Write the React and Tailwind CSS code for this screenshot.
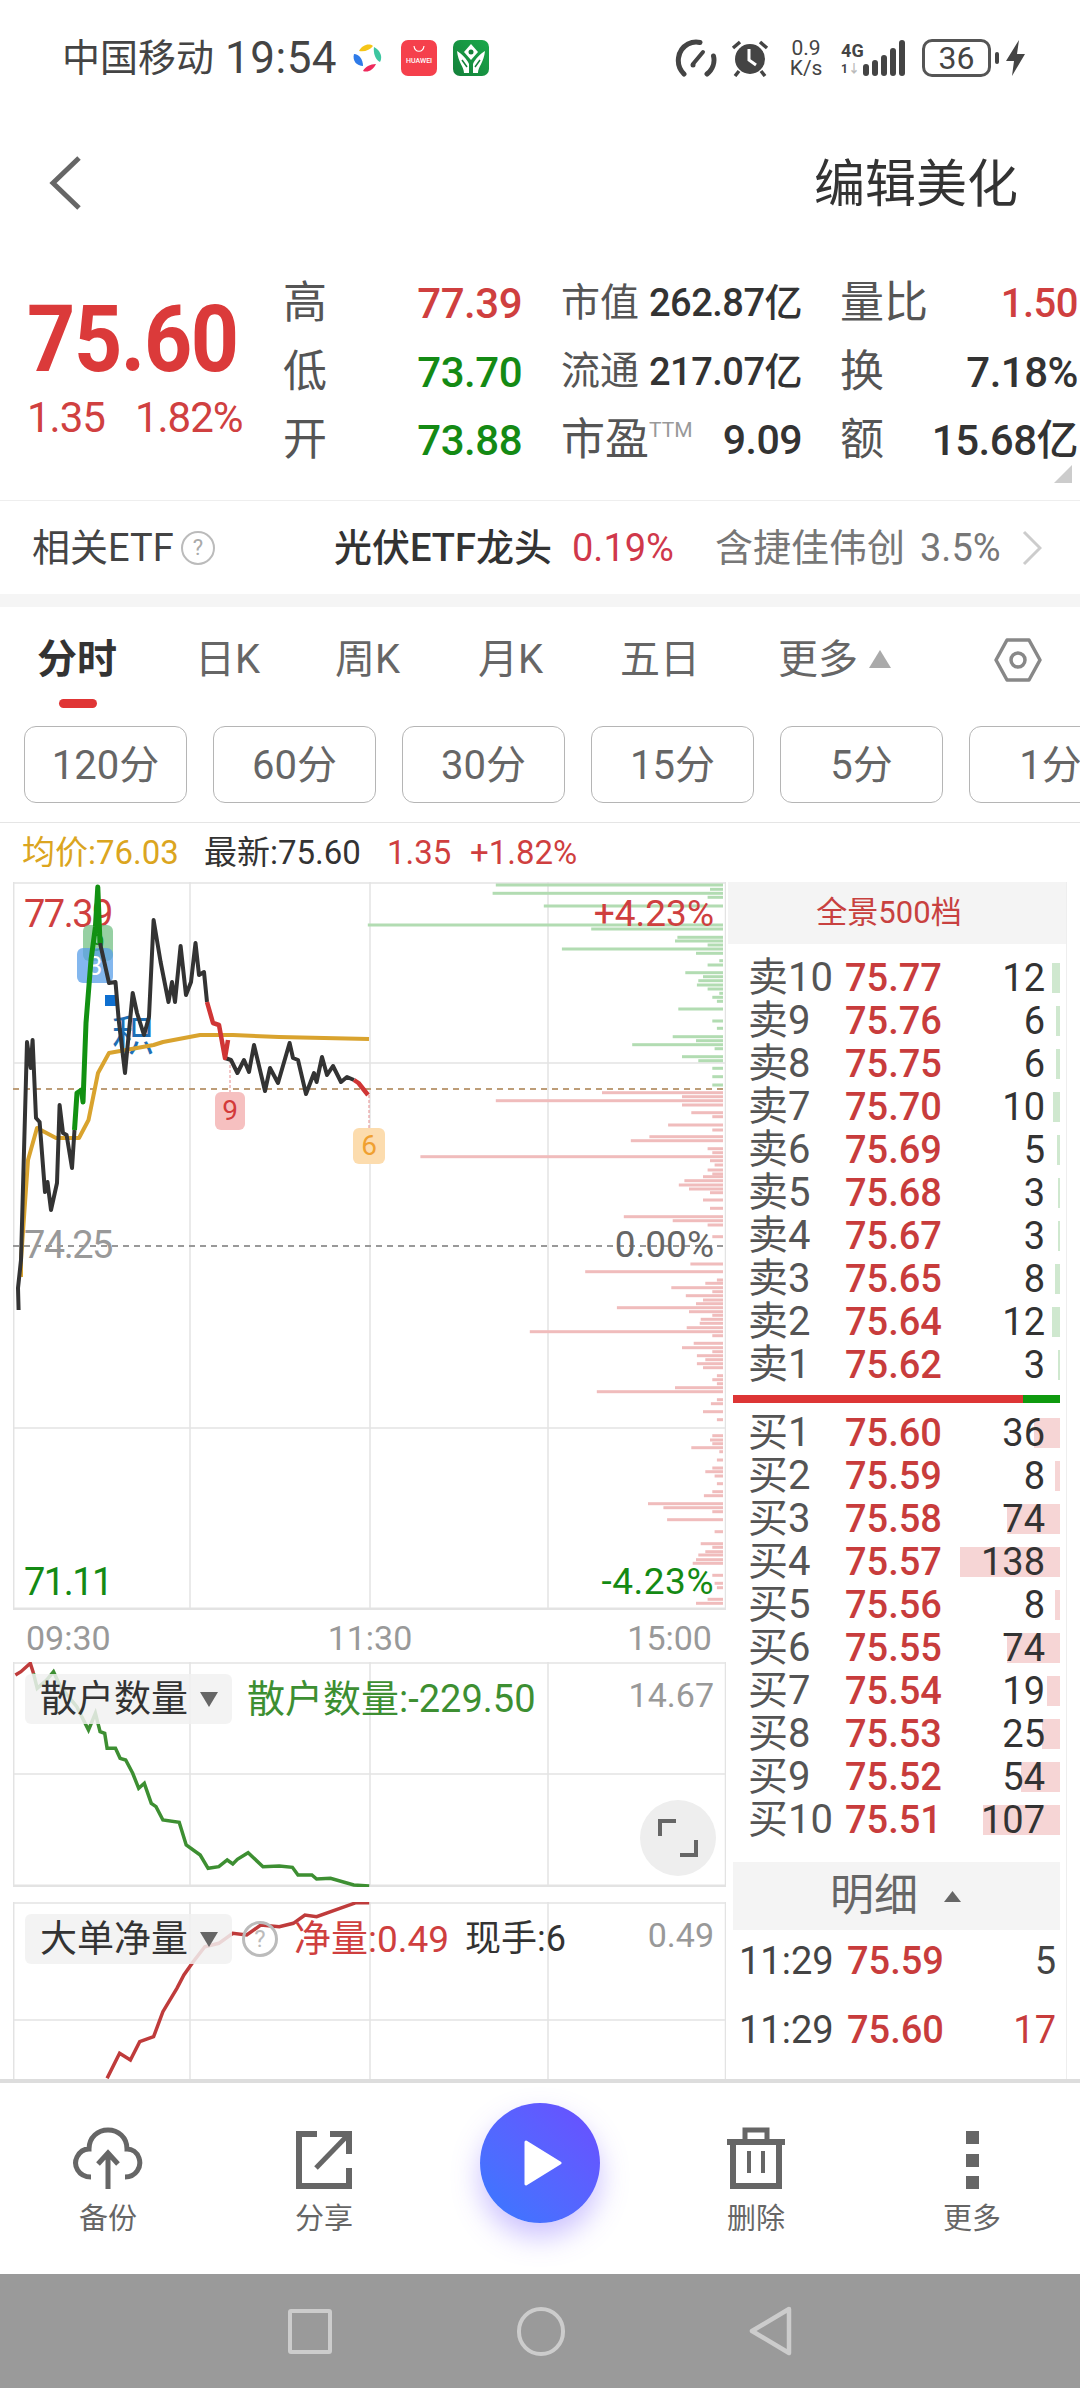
import React from 'react'

const toPts = (list) => list.map(p => p.join(',')).join(' ')
// readings off the chart: x is scaled, y is offset from the panel top
const fromZoom = (list, top) => list.map(([x, y]) => [+(x / 2.148).toFixed(1), +(top + y / 3).toFixed(1)])

const blackA = [[18.6,1310],[18,1288],[21,1260],[27,1042],[30.7,1068],[32.6,1040],[36,1118],[39.6,1122],[45,1192],[47.5,1182],[51,1210],[57,1183],[59.6,1105],[63,1133],[66.6,1135],[72,1168],[74.5,1130]]
const greenLine = [[74.5,1130],[77,1093],[81.5,1090],[83,1102],[86,1023],[91,960],[95.4,927],[97.8,887],[100,943]]
const blackB = [[100,943],[109,983],[115.5,982],[118.7,1020],[125,1073],[132.7,993],[137,1013],[144,1035],[149,1017],[153.6,920],[160.6,962],[168.5,1002],[172,982],[175,1002],[180.6,946],[186,995],[191,982],[195.5,943],[199,975],[204,972],[207,1002]]
const redA = [[207,1002],[213,1023],[219,1025],[225,1058],[228,1040]]
const blackC = [[225,1058],[231,1060],[237.4,1073],[244,1060],[249,1072],[254,1045],[265,1091],[270,1068],[278,1083],[289.6,1043],[293,1058],[298,1060],[306,1094],[314,1073],[316.6,1082],[322,1057],[327,1075],[333,1066],[341,1082],[347,1077],[354,1080]]
const redB = [[354,1080],[358.5,1083],[368,1095]]
const avgLine = [[21,1277],[21,1260],[28,1160],[37,1128],[56,1138],[79,1138],[88.5,1120],[98,1073],[109,1053],[153.6,1045],[163,1042],[200,1035],[233,1035],[279,1037],[369,1039]]

const greenBars = [[1065,75],[1058,100],[1525,88],[1520,112],[1168,138],[790,195],[1270,207],[1455,232],[1450,243],[1520,255],[1207,267],[1495,280],[1545,302],[1520,315],[1472,338],[1510,350],[1500,362],[1497,375],[1520,387],[1545,400],[1530,412],[1540,424],[1457,447],[1530,483],[1540,505],[1445,530],[1495,542],[1358,554],[1535,566],[1465,590],[1500,602],[1530,625],[1530,650],[1530,675]]
const redBarsA = [[1293,698],[1465,710],[1065,722],[1465,735],[1485,758],[1530,770],[1435,795],[1530,810],[1395,830],[1355,842],[1520,866],[1530,878],[903,890],[1525,902],[1535,915],[1520,930],[1530,942],[1510,950],[1470,962],[1458,975],[1480,987],[1525,998],[1510,1020],[1525,1045],[1340,1070],[1445,1082],[1520,1095],[1530,1130]]
const redBarsB = [[1483,12],[1257,35],[1540,60],[1515,70],[1442,83],[1530,95],[1473,107],[1510,120],[1495,131],[1325,143],[1480,155],[1530,166],[1505,178],[1503,190],[1475,203],[1138,215],[1530,227],[1490,250],[1465,263],[1530,275],[1497,287],[1515,299],[1497,311],[1510,323],[1540,347],[1530,359],[1540,371],[1450,383],[1282,395],[1540,419],[1527,431],[1510,455],[1540,479],[1530,527],[1525,540],[1530,551],[1485,563],[1545,575],[1540,600],[1530,624],[1515,635],[1535,648],[1540,671],[1530,695],[1512,707],[1392,731],[1425,743],[1530,755],[1433,779],[1535,815],[1505,851],[1530,862],[1515,875],[1500,885],[1495,899],[1488,910],[1530,946],[1535,970],[1540,983],[1520,1018],[1495,1030]]

const retailRed = [[72,40],[65,10],[45,35],[33,45]]
const retailGreen = [[72,40],[80,85],[100,60],[115,35],[130,80],[165,140],[190,210],[205,160],[215,215],[225,220],[230,265],[248,265],[258,295],[270,300],[285,340],[298,385],[310,370],[325,430],[335,440],[350,480],[385,487],[400,555],[430,585],[447,625],[470,620],[488,600],[500,612],[510,598],[533,578],[565,620],[600,618],[628,622],[640,645],[670,645],[680,657],[710,655],[760,675],[793,678]]
const bigOrder = [[230,1255],[257,1180],[280,1200],[300,1145],[330,1130],[350,1055],[380,985],[395,945],[415,905],[440,860],[470,850],[500,820],[530,825],[560,795],[600,800],[630,790],[655,765],[680,770],[730,745],[765,728],[793,728]]

const sells = [
  ['10', '75.77', '12', 8], ['9', '75.76', '6', 4], ['8', '75.75', '6', 4], ['7', '75.70', '10', 7], ['6', '75.69', '5', 3],
  ['5', '75.68', '3', 2], ['4', '75.67', '3', 2], ['3', '75.65', '8', 5], ['2', '75.64', '12', 8], ['1', '75.62', '3', 2],
]
const buys = [
  ['1', '75.60', '36', 26], ['2', '75.59', '8', 5], ['3', '75.58', '74', 53], ['4', '75.57', '138', 100], ['5', '75.56', '8', 5],
  ['6', '75.55', '74', 53], ['7', '75.54', '19', 13], ['8', '75.53', '25', 18], ['9', '75.52', '54', 39], ['10', '75.51', '107', 77],
]
const tabs = [['日K', 'w-[70px] ml-[77px]'], ['周K', 'w-[70px] ml-[70px]'], ['月K', 'w-[69px] ml-[73px]'], ['五日', 'w-[77px] ml-[73px]'], ['更多', 'w-[82px] ml-[81px]']]
const chips = ['120分', '60分', '30分', '15分', '5分', '1分']

function StatusBar() {
  return (
    <div className="h-[116px] flex items-center text-[#444] shrink-0">
      <span className="ml-[62px] text-[38px] leading-none">中国移动</span>
      <span className="ml-[11px] text-[44px] leading-none tracking-[0.5px]">19:54</span>
      <svg className="ml-[15px]" width="30" height="30" viewBox="0 0 30 30">
        <path d="M7 8 C10 2 17 0 21 3 C18 7 13 9 7 8Z" fill="#f5c518" />
        <path d="M22 4 C28 7 31 14 28 19 C24 17 21 11 22 4Z" fill="#3cc6a0" />
        <path d="M2 11 C7 11 11 16 11 23 C5 23 0 18 2 11Z" fill="#2f7be8" />
        <path d="M24 21 C21 27 16 30 11 28 C13 24 18 21 24 21Z" fill="#ee2a5c" />
      </svg>
      <div className="ml-[19px] w-[36px] h-[36px] rounded-[7px] bg-[#f5404c] flex flex-col items-center">
        <svg width="14" height="8" viewBox="0 0 14 8" className="mt-[5px]"><path d="M2 1 C3 8 11 8 12 1" stroke="#fff" strokeWidth="1.2" fill="none" /></svg>
        <span className="text-white text-[7px] leading-[10px] mt-[3px] font-medium">HUAWEI</span>
      </div>
      <svg className="ml-[16px]" width="36" height="36" viewBox="0 0 36 36">
        <defs><linearGradient id="abc" x1="0" y1="1" x2="1" y2="0"><stop offset="0" stopColor="#14803a" /><stop offset="1" stopColor="#1aa84a" /></linearGradient></defs>
        <rect width="36" height="36" rx="7" fill="url(#abc)" />
        <path d="M18 4 L25 12 L18 20 L11 12Z" fill="#fff" />
        <circle cx="18" cy="12" r="2.500" fill="#14803a" />
        <path d="M4 11 C8 13 14 19 16 24 L16 33 L11 33 C11 27 5 22 4 11Z" fill="#fff" />
        <path d="M32 11 C28 13 22 19 20 24 L20 33 L25 33 C25 27 31 22 32 11Z" fill="#fff" />
        <path d="M9 20 L14 27 M27 20 L22 27" stroke="#14803a" strokeWidth="1.500" />
      </svg>

      <svg className="ml-[186px]" width="42" height="38" viewBox="0 0 42 38" fill="none" stroke="#444" strokeWidth="5" strokeLinecap="round">
        <path d="M9 35 C0 26 2 11 13 5 C17 3 21 2.500 25 3.500" />
        <path d="M32 35 C38 30 40 23 38.500 17" />
        <path d="M18 25 L28 13" strokeWidth="4" />
        <circle cx="18" cy="26" r="2.500" fill="#444" stroke="none" />
      </svg>
      <svg className="ml-[14px]" width="38" height="38" viewBox="0 0 38 38">
        <circle cx="19" cy="20" r="15" fill="#444" />
        <path d="M18 10 V21 L25 26" stroke="#fff" strokeWidth="3" fill="none" />
        <path d="M2 9 L9 3 M36 9 L29 3 M8 32 L4 37 M30 32 L34 37" stroke="#444" strokeWidth="3.500" />
      </svg>
      <div className="ml-[18px] w-[38px] flex flex-col items-center text-[#444] text-[21px] leading-[20px] font-normal">
        <span>0.9</span>
        <span>K/s</span>
      </div>
      <div className="ml-[16px] w-[26px] flex flex-col text-[#444] font-bold">
        <span className="text-[18px] leading-[22px]">4G</span>
        <span className="text-[12px] leading-[14px]">1<span className="text-[#bbb]">↓</span></span>
      </div>
      <svg className="-ml-[4px]" width="44" height="36" viewBox="0 0 44 36" fill="#444">
        <rect x="0" y="24" width="6" height="12" rx="3" />
        <rect x="9" y="20" width="6" height="16" rx="3" />
        <rect x="18" y="15" width="6" height="21" rx="3" />
        <rect x="27" y="8" width="6" height="28" rx="3" />
        <rect x="36" y="0" width="6" height="36" rx="3" />
      </svg>
      <div className="ml-[15px] w-[69px] h-[38px] rounded-[10px] border-[3px] border-[#555] flex items-center justify-center text-[32px] leading-none">36</div>
      <div className="ml-[4px] w-[4px] h-[12px] rounded-full bg-[#444]"></div>
      <svg className="ml-[7px]" width="19" height="36" viewBox="0 0 19 36"><path d="M13 0 L0 21 L8 21 L6 36 L19 14 L11 14Z" fill="#444" /></svg>
    </div>
  )
}

function Header() {
  return (
    <div className="h-[134px] flex items-center justify-between shrink-0">
      <svg className="ml-[48px]" width="36" height="56" viewBox="0 0 36 56" fill="none"><path d="M31 3 L5 28 L31 53" stroke="#666" strokeWidth="5" /></svg>
      <span className="mr-[62px] mt-[3px] text-[51px] leading-none text-[#333]">编辑美化</span>
    </div>
  )
}

function StatRow({ a, aVal, aColor, b, bVal, bCls = 'text-[38px] tracking-[-0.5px]', c, cVal, cCls }) {
  return (
    <div className="h-[68.5px] flex items-center">
      <div className="w-[239px] flex items-center justify-between">
        <span className="text-[44px] text-[#555] leading-none">{a}</span>
        <span className={"mt-[2px] text-[42px] font-medium leading-none tracking-[-0.5px] " + aColor}>{aVal}</span>
      </div>
      <div className="ml-[39px] w-[241px] flex items-center justify-between">
        <span className="text-[39px] text-[#555] leading-none flex items-start whitespace-nowrap">{b}</span>
        <span className={"font-medium text-[#333] leading-none " + bCls}>{bVal}</span>
      </div>
      <div className="ml-[38px] w-[238px] flex items-center justify-between">
        <span className="text-[44px] text-[#555] leading-none">{c}</span>
        <span className={"mt-[2px] leading-none tracking-[-0.5px] " + cCls}>{cVal}</span>
      </div>
    </div>
  )
}

function Quote() {
  return (
    <div className="relative h-[251px] pt-[19px] flex border-b border-[#eeeeee] shrink-0">
      <div className="w-[283px] pl-[27px] shrink-0">
        <div className="mt-[26px] origin-left scale-x-[0.915] text-[92px] leading-[90px] font-bold text-[#db3a3a] tracking-[-1.5px]">75.60</div>
        <div className="mt-[13px] flex text-[42px] leading-[40px] text-[#d04040] tracking-[-1px]">
          <span>1.35</span>
          <span className="ml-[30px]">1.82%</span>
        </div>
      </div>
      <div>
        <StatRow a="高" aVal="77.39" aColor="text-[#cf3f3f]" b="市值" bVal="262.87亿" c="量比" cVal="1.50" cCls="text-[40px] text-[#cf3f3f] font-medium" />
        <StatRow a="低" aVal="73.70" aColor="text-[#148a14]" b="流通" bVal="217.07亿" c="换" cVal="7.18%" cCls="text-[42px] text-[#333] font-medium" />
        <StatRow a="开" aVal="73.88" aColor="text-[#148a14]"
          b={<><span className="text-[44px]">市盈</span><span className="text-[21px] leading-[24px] text-[#999]">TTM</span></>}
          bVal="9.09" bCls="text-[41px] tracking-[-0.5px]" c="额" cVal="15.68亿" cCls="text-[42px] text-[#333] font-medium" />
      </div>
      <svg className="absolute right-[8px] bottom-[17px]" width="18" height="18" viewBox="0 0 18 18"><path d="M18 0 V18 H0Z" fill="#cccccc" /></svg>
    </div>
  )
}

function EtfRow() {
  return (
    <div className="h-[93px] flex items-center shrink-0 text-[38px] leading-none whitespace-nowrap">
      <span className="ml-[32px] w-[141px] text-[#444]">相关ETF</span>
      <span className="ml-[8px] w-[34px] h-[34px] rounded-full border-2 border-[#bbb] text-[#aaa] text-[22px] flex items-center justify-center">?</span>
      <span className="ml-[119px] w-[222px] text-[#333] font-medium">光伏ETF龙头</span>
      <span className="ml-[16px] w-[103px] text-[#d0384b]">0.19%</span>
      <span className="ml-[40px] w-[190px] text-[#777]">含捷佳伟创</span>
      <span className="ml-[15px] w-[82px] text-[#777]">3.5%</span>
      <svg className="ml-[20px]" width="20" height="36" viewBox="0 0 20 36" fill="none"><path d="M2 2 L18 18 L2 34" stroke="#ccc" strokeWidth="3" /></svg>
    </div>
  )
}

function Tabs() {
  return (
    <div className="relative h-[119px] shrink-0 flex items-start pt-[33px] text-[40px] leading-[40px] text-[#666]">
      <span className="ml-[37px] w-[81px] font-bold text-[#333]">分时</span>
      {tabs.map(([label, cls]) => (
        <span key={label} className={cls + " whitespace-nowrap"}>{label}</span>
      ))}
      <svg className="ml-[8px] mt-[9px]" width="24" height="20" viewBox="0 0 24 20"><path d="M12 1 L23 19 H1Z" fill="#aaa" /></svg>
      <svg className="ml-[102px] -mt-[3px]" width="48" height="46" viewBox="0 0 48 46" fill="none">
        <path d="M13 3 H35 L46 23 L35 43 H13 L2 23Z" stroke="#888" strokeWidth="3.500" strokeLinejoin="round" />
        <circle cx="24" cy="23" r="7" stroke="#888" strokeWidth="3.500" />
      </svg>
      <div className="absolute left-[59px] top-[92px] w-[38px] h-[9px] rounded-full bg-[#e03535]"></div>
    </div>
  )
}

function Chips() {
  return (
    <div className="h-[97px] pl-[24px] flex items-start gap-[26px] border-b border-[#e5e5e5] overflow-hidden shrink-0">
      {chips.map(c => (
        <div key={c} className="w-[163px] h-[77px] shrink-0 rounded-[12px] border border-[#b5b5b5] flex items-center justify-center pt-[2px] text-[40px] leading-none text-[#666]">{c}</div>
      ))}
    </div>
  )
}

function Legend() {
  return (
    <div className="h-[59px] flex items-center pl-[22px] text-[33px] leading-none shrink-0 whitespace-nowrap">
      <span className="w-[156px] text-[#dba520]">均价:76.03</span>
      <span className="ml-[26px] w-[157px] text-[#333]">最新:75.60</span>
      <span className="ml-[26px] w-[58px] text-[#cf3f3f]">1.35</span>
      <span className="ml-[25px] text-[#cf3f3f]">+1.82%</span>
    </div>
  )
}

function MainChart() {
  return (
    <div className="relative h-[728px] overflow-hidden">
      <svg className="absolute inset-0" width="713" height="728" viewBox="13 882 713 728">
        <g stroke="#e3e3e3" strokeWidth="1.500">
          <path d="M13.700 882 V1610 M190 882 V1610 M370 882 V1610 M548 882 V1610 M725.500 882 V1610" fill="none" />
          <path d="M13 883 H726 M13 1063 H726 M13 1428 H726" fill="none" />
          <path d="M13 1609 H726" strokeWidth="3" />
        </g>
        {fromZoom(greenBars, 860).map(([x, y], i) => <rect key={i} x={x} y={y - 1.500} width={723 - x} height="3" fill="#b2dcb2" />)}
        {fromZoom(redBarsA, 860).map(([x, y], i) => <rect key={i} x={x} y={y - 1.500} width={723 - x} height="3" fill="#f0bcbc" />)}
        {fromZoom(redBarsB, 1260).map(([x, y], i) => <rect key={i} x={x} y={y - 1.500} width={723 - x} height="3" fill="#f0bcbc" />)}
        <path d="M13 1089 H726" stroke="#bd9d78" strokeWidth="2" strokeDasharray="6 5" />
        <path d="M13 1246 H726" stroke="#999" strokeWidth="2" strokeDasharray="6 5" />
        <path d="M230 1060 V1092 M369 1095 V1128" stroke="#e58a8a" strokeWidth="1" strokeDasharray="3 2" />
      </svg>

      <span className="absolute left-[11px] top-[13px] text-[38px] leading-[38px] tracking-[-1.5px] text-[#cf3f3f]">77.39</span>
      <span className="absolute right-[12px] top-[13px] text-[37px] leading-[38px] text-[#cf3f3f]">+4.23%</span>
      <span className="absolute left-[11px] top-[344px] text-[38px] leading-[38px] tracking-[-1.5px] text-[#999]">74.25</span>
      <span className="absolute right-[12px] top-[344px] text-[37px] leading-[38px] text-[#666]">0.00%</span>
      <span className="absolute left-[11px] top-[681px] text-[38px] leading-[38px] tracking-[-1.5px] text-[#148a14]">71.11</span>
      <span className="absolute right-[12px] top-[681px] text-[37px] leading-[38px] tracking-[0.5px] text-[#148a14]">-4.23%</span>

      <div className="absolute left-[70px] top-[43px] w-[30px] h-[36px] rounded-[6px] bg-[#7cc48c]/80 flex items-center justify-center text-[24px] leading-none text-[#129112]">9</div>
      <div className="absolute left-[64px] top-[66px] w-[36px] h-[35px] rounded-[6px] bg-[#5a9fe8]/75 flex items-center justify-center text-[26px] leading-none text-white">3</div>
      <div className="absolute left-[92px] top-[113px] w-[11px] h-[11px] bg-[#0f6fcf]"></div>
      <span className="absolute left-[99px] top-[134px] text-[42px] leading-[42px] text-[#1f6fb5]">积</span>
      <div className="absolute left-[202px] top-[210px] w-[30px] h-[38px] rounded-[6px] bg-[#f6c0c0] flex items-center justify-center text-[28px] leading-none text-[#d33a3a]">9</div>
      <div className="absolute left-[340px] top-[246px] w-[32px] h-[36px] rounded-[6px] bg-[#fcdcae] flex items-center justify-center text-[28px] leading-none text-[#f0a030]">6</div>

      <svg className="absolute inset-0" width="713" height="728" viewBox="13 882 713 728" fill="none" strokeLinejoin="round">
        <polyline points={toPts(avgLine)} stroke="#d9a32e" strokeWidth="4" />
        <polyline points={toPts(blackA)} stroke="#333" strokeWidth="4" />
        <polyline points={toPts(blackB)} stroke="#333" strokeWidth="4" />
        <polyline points={toPts(blackC)} stroke="#333" strokeWidth="4" />
        <polyline points={toPts(greenLine)} stroke="#129112" strokeWidth="5" />
        <polyline points={toPts(redA)} stroke="#d03535" strokeWidth="4.500" />
        <polyline points={toPts(redB)} stroke="#d03535" strokeWidth="4.500" />
      </svg>
    </div>
  )
}

function TimeAxis() {
  return (
    <div className="h-[52px] flex items-center justify-between pt-[4px] pl-[13px] pr-[14px] text-[34px] leading-none text-[#999]">
      <span>09:30</span>
      <span className="ml-[2px]">11:30</span>
      <span>15:00</span>
    </div>
  )
}

function IndicatorGrid({ height, mid, children }) {
  return (
    <svg className="absolute inset-0" width="713" height={height} viewBox={`0 0 713 ${height}`} fill="none">
      <path d={`M0.700 0 V${height} M177 0 V${height} M357 0 V${height} M535 0 V${height} M712.500 0 V${height}`} stroke="#e3e3e3" strokeWidth="1.500" />
      <path d={`M0 1 H713 M0 ${mid} H713`} stroke="#e3e3e3" strokeWidth="1.500" />
      {children}
    </svg>
  )
}

const shift = (list, top) => toPts(list.map(([x, y]) => [x - 13, y - top]))

function RetailPanel() {
  return (
    <div className="relative h-[225px]">
      <IndicatorGrid height={225} mid={112}>
        <path d="M0 224 H713" stroke="#e3e3e3" strokeWidth="3" />
        <polyline points={shift(fromZoom(retailGreen, 1660), 1662)} stroke="#3d8f32" strokeWidth="3.500" />
        <polyline points={shift(fromZoom(retailRed, 1660), 1662)} stroke="#bf3b3b" strokeWidth="3.500" />
      </IndicatorGrid>
      <div className="absolute inset-x-0 top-[12px] flex items-center">
        <div className="ml-[12px] w-[207px] h-[50px] rounded-[6px] bg-[#f1f1f1]/85 flex items-center text-[37px] leading-none text-[#333]">
          <span className="ml-[15px]">散户数量</span>
          <svg className="ml-[12px]" width="18" height="15" viewBox="0 0 18 15"><path d="M0 0 H18 L9 15Z" fill="#666" /></svg>
        </div>
        <span className="ml-[15px] text-[38px] leading-none text-[#3d8f32]">散户数量:-229.50</span>
        <span className="ml-auto mr-[12px] -mt-[8px] text-[34px] leading-none text-[#999]">14.67</span>
      </div>
      <div className="absolute right-[10px] top-[138px] w-[76px] h-[76px] rounded-full bg-[#eeeeee] flex items-center justify-center">
        <svg width="40" height="40" viewBox="0 0 40 40" fill="none" stroke="#666" strokeWidth="4"><path d="M2 18 V3 H18 M38 22 V37 H22" /></svg>
      </div>
    </div>
  )
}

function BigOrderPanel() {
  return (
    <div className="relative h-[177px] mt-[15px]">
      <IndicatorGrid height={177} mid={118}>
        <polyline points={shift(fromZoom(bigOrder, 1660), 1902)} stroke="#bf3b3b" strokeWidth="3.500" />
      </IndicatorGrid>
      <div className="absolute inset-x-0 top-[12px] flex items-center">
        <div className="ml-[12px] w-[207px] h-[50px] rounded-[6px] bg-[#f1f1f1]/85 flex items-center text-[37px] leading-none text-[#333]">
          <span className="ml-[15px]">大单净量</span>
          <svg className="ml-[12px]" width="18" height="15" viewBox="0 0 18 15"><path d="M0 0 H18 L9 15Z" fill="#666" /></svg>
        </div>
        <div className="ml-[10px] w-[36px] h-[36px] rounded-full border-[3px] border-[#bbb] text-[#bbb] text-[24px] flex items-center justify-center leading-none">?</div>
        <span className="ml-[16px] w-[152px] whitespace-nowrap text-[37px] leading-none text-[#cf3f3f]">净量:0.49</span>
        <span className="ml-[19px] text-[36px] leading-none text-[#333]">现手:6</span>
        <span className="ml-auto mr-[12px] -mt-[8px] text-[34px] leading-none text-[#999]">0.49</span>
      </div>
    </div>
  )
}

function BookRow({ side, row, barColor }) {
  const [lvl, price, qty, bar] = row
  return (
    <div className="relative h-[43px] flex items-center leading-none">
      <div className={"absolute right-[6px] h-[30px] " + barColor} style={{ width: bar }}></div>
      <span className="relative ml-[22px] w-[97px] text-[40px] text-[#555] whitespace-nowrap">{side}{lvl}</span>
      <span className="relative text-[38px] font-medium text-[#c83c3c]">{price}</span>
      <span className="relative ml-auto mr-[21px] text-[38px] text-[#333]">{qty}</span>
    </div>
  )
}

function OrderBook() {
  return (
    <div className="w-[341px] h-[1199px] border-r border-[#eeeeee] shrink-0 overflow-hidden -mt-[1px]">
      <div className="h-[63px] ml-[2px] pr-[16px] bg-[#f4f4f4] flex items-center justify-center text-[31px] leading-none text-[#c8413f]">全景500档</div>
      <div className="pt-[12px]">
        {sells.map(r => <BookRow key={r[0]} side="卖" row={r} barColor="bg-[#cfe8cf]" />)}
      </div>
      <div className="mt-[9px] ml-[7px] mr-[6px] h-[8px] flex">
        <div className="w-[291px] bg-[#dd3535]"></div>
        <div className="w-[37px] bg-[#0f9a0f]"></div>
      </div>
      <div className="mt-[8px]">
        {buys.map(r => <BookRow key={r[0]} side="买" row={r} barColor="bg-[#f6d5d5]" />)}
      </div>
      <div className="mt-[21px] ml-[7px] mr-[6px] h-[68px] bg-[#f4f4f4] flex items-center text-[44px] leading-none text-[#666]">
        <span className="ml-[97px]">明细</span>
        <svg className="ml-[26px]" width="17" height="11" viewBox="0 0 17 11"><path d="M8.500 0 L17 11 H0Z" fill="#666" /></svg>
      </div>
      <div className="flex flex-col gap-[7px] text-[38px] leading-none">
        <div className="h-[62px] flex items-center">
          <span className="ml-[13px] w-[108px] text-[#444]">11:29</span>
          <span className="font-medium text-[#c83c3c]">75.59</span>
          <span className="ml-auto mr-[10px] text-[#444]">5</span>
        </div>
        <div className="h-[62px] flex items-center">
          <span className="ml-[13px] w-[108px] text-[#444]">11:29</span>
          <span className="font-medium text-[#c83c3c]">75.60</span>
          <span className="ml-auto mr-[10px] text-[#c83c3c]">17</span>
        </div>
      </div>
    </div>
  )
}

function ToolItem({ icon, label }) {
  return (
    <div className="w-[216px] flex flex-col items-center">
      <div className="h-[64px] flex items-end">{icon}</div>
      <span className="mt-[15px] text-[29px] leading-[30px] text-[#666]">{label}</span>
    </div>
  )
}

function Toolbar() {
  const stroke = { fill: 'none', stroke: '#666', strokeWidth: 5 }
  return (
    <div className="h-[195px] border-t-[4px] border-[#dddddd] flex items-start pt-[42px] shrink-0">
      <ToolItem label="备份" icon={
        <svg width="72" height="62" viewBox="0 0 72 62" {...stroke}>
          <path d="M19 50 C6 50 1 38 5 30 C8 24 13 22 17 22 C17 10 26 3 36 3 C46 3 55 10 55 22 C60 22 65 25 67 31 C70 40 64 50 53 50" />
          <path d="M36 62 V26 M26 37 L36 26 L46 37" />
        </svg>
      } />
      <ToolItem label="分享" icon={
        <svg width="56" height="58" viewBox="0 0 56 58" {...stroke}>
          <path d="M21 3 H3 V55 H53 V37" strokeWidth="6" />
          <path d="M34 3 H53 V23" strokeWidth="6" />
          <path d="M20 37 L50 6" />
        </svg>
      } />
      <div className="w-[216px] flex justify-center -mt-[22px]">
        <div className="w-[120px] h-[120px] rounded-full bg-gradient-to-tr from-[#3479ff] to-[#6a4dff] shadow-[0_14px_28px_rgba(110,80,255,0.35)] flex items-center justify-center">
          <svg className="ml-[6px]" width="38" height="48" viewBox="0 0 38 48"><path d="M2 3 L36 24 L2 45Z" fill="#fff" stroke="#fff" strokeWidth="3" strokeLinejoin="round" /></svg>
        </div>
      </div>
      <ToolItem label="删除" icon={
        <svg width="58" height="62" viewBox="0 0 58 62" {...stroke}>
          <path d="M0 15 H58" strokeWidth="6" />
          <path d="M18 14 V3 H40 V14" strokeWidth="5" />
          <path d="M6 16 V59 H52 V16" strokeWidth="6" />
          <path d="M22 24 V46 M36 24 V46" strokeWidth="4" />
        </svg>
      } />
      <ToolItem label="更多" icon={
        <div className="h-[58px] flex flex-col justify-between">
          <div className="w-[13px] h-[13px] bg-[#666]"></div>
          <div className="w-[13px] h-[13px] bg-[#666]"></div>
          <div className="w-[13px] h-[13px] bg-[#666]"></div>
        </div>
      } />
    </div>
  )
}

function NavBar() {
  return (
    <div className="flex-1 bg-[#9a9a9a] flex items-center justify-center">
      <div className="w-[44px] h-[45px] rounded-[3px] border-[4px] border-[#cccccc]"></div>
      <div className="ml-[185px] w-[48px] h-[49px] rounded-full border-[4px] border-[#cccccc]"></div>
      <svg className="ml-[184px]" width="44" height="50" viewBox="0 0 44 50" fill="none">
        <path d="M40 3 L3 25 L40 47Z" stroke="#cccccc" strokeWidth="4.500" strokeLinejoin="round" />
      </svg>
    </div>
  )
}

export default function App() {
  return (
    <div className="w-[1080px] h-[2388px] bg-white overflow-hidden flex flex-col [font-family:Roboto,'Noto_Sans_CJK_SC',sans-serif]">
      <StatusBar />
      <Header />
      <Quote />
      <EtfRow />
      <div className="h-[13px] bg-[#f5f5f5] shrink-0"></div>
      <Tabs />
      <Chips />
      <Legend />
      <div className="h-[1197px] flex shrink-0 overflow-hidden">
        <div className="ml-[13px] w-[713px] shrink-0">
          <MainChart />
          <TimeAxis />
          <RetailPanel />
          <BigOrderPanel />
        </div>
        <OrderBook />
      </div>
      <Toolbar />
      <NavBar />
    </div>
  )
}
